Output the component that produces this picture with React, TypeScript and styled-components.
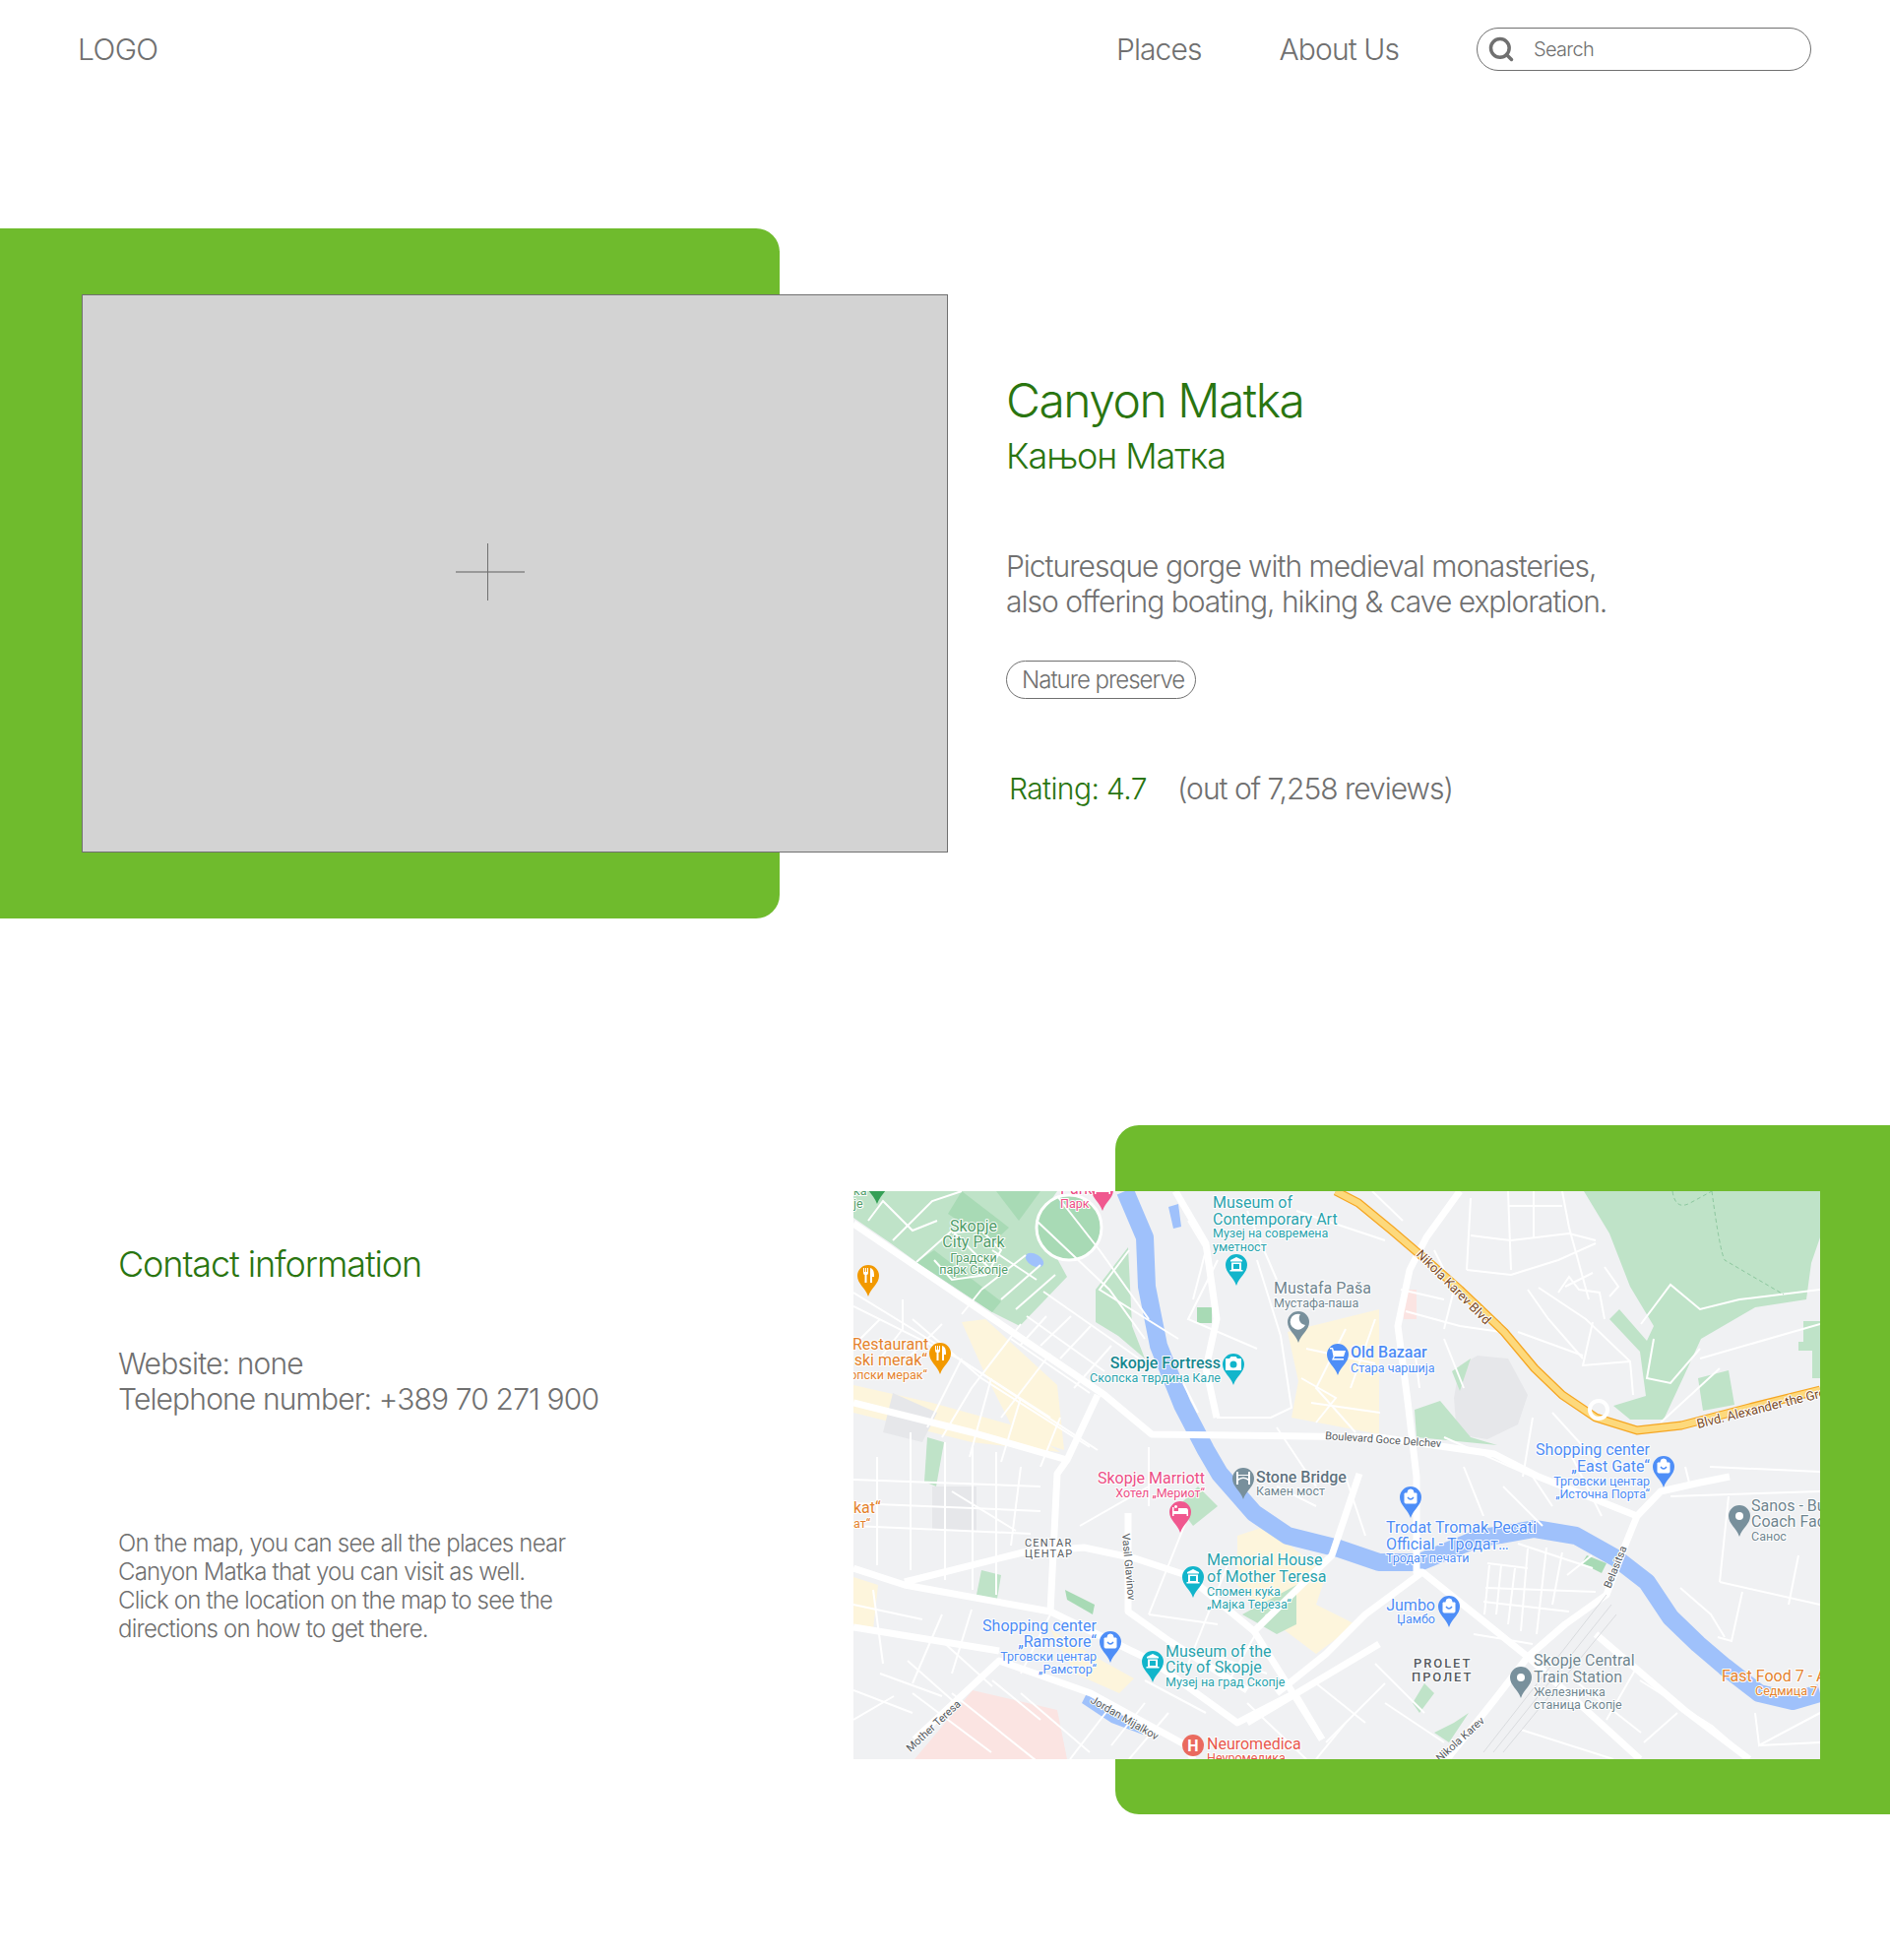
import * as React from 'react'
import styled, { createGlobalStyle } from 'styled-components'
import { Search } from 'lucide-react'

const GREEN = '#6fbb2d'
const DARK_GREEN = '#2a7510'
const GREY = '#707070'

const GlobalStyle = createGlobalStyle`
  html, body { margin: 0; padding: 0; background: #fff; }
  body { font-family: Inter, "Noto Sans", sans-serif; font-weight: 300; color: ${GREY}; }
`

const Page = styled.div`
  width: 1920px;
  height: 1991px;
  overflow: hidden;
`

const Nav = styled.header`
  display: flex;
  align-items: center;
  height: 100px;
  padding: 0 80px 0 79px;
`

const Logo = styled.div`
  font-size: 30px;
  letter-spacing: -0.6px;
  margin-right: auto;
`

const NavLink = styled.a`
  font-size: 30px;
  letter-spacing: -0.9px;
  margin-right: 79px;
`

const SearchBox = styled.div`
  display: flex;
  align-items: center;
  box-sizing: border-box;
  width: 340px;
  height: 44px;
  border: 1px solid ${GREY};
  border-radius: 22px;
  padding-left: 10px;
  font-size: 20px;
  font-weight: 300;
  letter-spacing: -0.7px;

  svg { margin-right: 19px; }
`

const Hero = styled.section`
  display: flex;
  margin-top: 132px;
`

const HeroPanel = styled.div`
  box-sizing: border-box;
  flex: none;
  width: 792px;
  height: 701px;
  padding: 67px 0 0 83px;
  background: ${GREEN};
  border-radius: 0 24px 24px 0;
`

const Placeholder = styled.div`
  display: flex;
  align-items: center;
  justify-content: center;
  box-sizing: border-box;
  width: 880px;
  height: 567px;
  padding: 0 50px 3px 0;
  background: #d3d3d3;
  border: 1px solid ${GREY};
`

const HeroInfo = styled.div`
  margin-left: 230px;
  padding-top: 146px;
`

const Title = styled.h1`
  margin: 0;
  font-size: 48px;
  line-height: 58px;
  font-weight: 300;
  letter-spacing: -1.5px;
  color: ${DARK_GREEN};
`

const Subtitle = styled.h2`
  margin: 0;
  font-size: 36px;
  line-height: 54px;
  font-weight: 300;
  letter-spacing: -1.1px;
  color: ${DARK_GREEN};
`

const Description = styled.p`
  margin: 67px 0 0;
  font-size: 30px;
  line-height: 36px;
  letter-spacing: -1px;
`

const Tag = styled.div`
  display: inline-flex;
  align-items: center;
  box-sizing: border-box;
  height: 39px;
  margin-top: 42px;
  padding: 0 11px 0 15px;
  border: 1px solid ${GREY};
  border-radius: 20px;
  font-size: 24px;
  letter-spacing: -1px;
`

const Rating = styled.div`
  display: flex;
  margin: 73px 0 0 3px;
  font-size: 30px;
  line-height: 36px;
  letter-spacing: -1px;
`

const RatingScore = styled.span`
  color: ${DARK_GREEN};
  letter-spacing: -0.6px;
  margin-right: 31px;
`

const MapSection = styled.section`
  display: flex;
  justify-content: space-between;
  margin-top: 210px;
`

const Contact = styled.div`
  padding: 118px 0 0 120px;
`

const ContactTitle = styled.h3`
  margin: 0;
  font-size: 36px;
  line-height: 46px;
  font-weight: 300;
  letter-spacing: -1.1px;
  color: ${DARK_GREEN};
`

const ContactLines = styled.p`
  margin: 60px 0 0;
  font-size: 30px;
  line-height: 36px;
  letter-spacing: -0.85px;
`

const ContactNote = styled.p`
  margin: 114px 0 0;
  font-size: 24px;
  line-height: 29px;
  letter-spacing: -0.8px;
`

const MapPanel = styled.div`
  box-sizing: border-box;
  flex: none;
  width: 787px;
  height: 700px;
  padding-top: 67px;
  background: ${GREEN};
  border-radius: 24px 0 0 24px;
`

const MapFrame = styled.div`
  width: 982px;
  height: 577px;
  margin-left: -266px;
  background: #f0f1f3;
  overflow: hidden;

  svg { display: block; }
`

const MapText = styled.text<{ $size?: number; $weight?: number; $spacing?: number }>`
  font-family: Roboto, sans-serif;
  font-size: ${p => p.$size ?? 16}px;
  font-weight: ${p => p.$weight ?? 400};
  letter-spacing: ${p => p.$spacing ?? 0}px;
  paint-order: stroke;
  stroke: #fff;
  stroke-width: 2px;
  stroke-linejoin: round;
`

type Glyph = 'shop' | 'museum' | 'camera' | 'fork' | 'bed' | 'moon' | 'dot' | 'cart' | 'bridge' | 'none'

const Pin = ({ x, y, color, glyph }: { x: number; y: number; color: string; glyph: Glyph }) => (
  <g transform={`translate(${x} ${y})`}>
    <path d="M0 0C-3-9-11-13-11-21A11 11 0 1 1 11-21C11-13 3-9 0 0Z" fill={color} />
    {glyph === 'shop' && <path d="M-6-25H6V-16Q6-15 5-15H-5Q-6-15-6-16ZM-3-25V-26A3 3 0 0 1 3-26V-25" fill="#fff" stroke="#fff" strokeWidth="1" />}
    {glyph === 'shop' && <path d="M-3-21Q0-17 3-21" fill="none" stroke={color} strokeWidth="1.4" />}
    {glyph === 'museum' && <path d="M-6-26L0-29L6-26V-24.500H-6ZM-5-23.500H5V-16H6.500V-14.500H-6.500V-16H-5ZM-3-22V-17H3V-22Z" fill="#fff" fillRule="evenodd" />}
    {glyph === 'bridge' && <path d="M-7-28H-5V-25H5V-28H7V-15H5V-19Q0-23-5-19V-15H-7ZM-5-24V-21Q0-24 5-21V-24Z" fill="#fff" fillRule="evenodd" />}
    {glyph === 'camera' && <path d="M-8-27H-4L-2.500-29H2.500L4-27H8V-15H-8ZM0-24.500A3.500 3.500 0 1 0 0-17.500A3.500 3.500 0 1 0 0-24.500Z" fill="#fff" fillRule="evenodd" />}
    {glyph === 'fork' && <path d="M-5-29V-24Q-5-22-3.500-22V-14H-1.500V-22Q0-22 0-24V-29H-1V-25H-2V-29H-3V-25H-4V-29ZM2-14V-29Q6-28 6-22V-20H4V-14Z" fill="#fff" />}
    {glyph === 'bed' && <path d="M-8-26H-6.500V-22H-2V-25H6Q8-25 8-22V-17H6.500V-19H-6.500V-17H-8ZM-4.500-25A1.500 1.500 0 1 1-4.490-25Z" fill="#fff" />}
    {glyph === 'moon' && <path d="M2-29A8 8 0 1 0 7-18A7 7 0 0 1 2-29Z" fill="#fff" />}
    {glyph === 'dot' && <circle cx="0" cy="-21" r="4" fill="#fff" />}
    {glyph === 'cart' && <path d="M-8-28H-5L-4-25H8L6-19H-3L-4-17H6V-15.500H-6L-4.500-19L-6-26.500H-8Z" fill="#fff" />}
  </g>
)

type Label = { t: string; x: number; y: number; c: string; s?: number; w?: number; a?: 'start' | 'end' | 'middle'; r?: number; ls?: number }

const TEAL = '#2aa3ad'
const BLUE = '#4d8cf5'
const SLATE = '#6f858f'
const ORANGE = '#e4822c'
const PINK = '#ec4f86'
const PARK = '#4f9d69'
const ROAD = '#555a5e'
const BROWN = '#7a4a1f'

const labels: Label[] = [
  { t: 'Park', x: 210, y: 3, c: PINK },
  { t: 'Парк', x: 210, y: 17, c: PINK, s: 12.5 },
  { t: 'ка', x: 0, y: 4, c: PARK, s: 12.5 },
  { t: 'је', x: 0, y: 17, c: PARK, s: 12.5 },
  { t: 'Skopje', x: 122, y: 41, c: PARK, a: 'middle' },
  { t: 'City Park', x: 122, y: 57, c: PARK, a: 'middle' },
  { t: 'Градски', x: 122, y: 72, c: PARK, s: 12.5, a: 'middle' },
  { t: 'парк Скопје', x: 122, y: 84, c: PARK, s: 12.5, a: 'middle' },
  { t: 'Museum of', x: 365, y: 17, c: TEAL },
  { t: 'Contemporary Art', x: 365, y: 34, c: TEAL },
  { t: 'Музеј на современа', x: 365, y: 47, c: TEAL, s: 12.5 },
  { t: 'уметност', x: 365, y: 61, c: TEAL, s: 12.5 },
  { t: 'Mustafa Paša', x: 427, y: 104, c: SLATE },
  { t: 'Мустафа-паша', x: 427, y: 118, c: SLATE, s: 12.5 },
  { t: 'Restaurant', x: -1, y: 161, c: ORANGE },
  { t: 'ski merak“', x: 75, y: 177, c: ORANGE, a: 'end' },
  { t: 'опски мерак“', x: 75, y: 191, c: ORANGE, s: 12.5, a: 'end' },
  { t: 'Skopje Fortress', x: 373, y: 180, c: '#17878f', w: 500, a: 'end' },
  { t: 'Скопска тврдина Кале', x: 373, y: 194, c: TEAL, s: 12.5, a: 'end' },
  { t: 'Old Bazaar', x: 505, y: 169, c: BLUE, w: 500 },
  { t: 'Стара чаршија', x: 505, y: 184, c: BLUE, s: 12.5 },
  { t: 'Boulevard Goce Delchev', x: 479, y: 252, c: ROAD, s: 11, r: 4 },
  { t: 'Nikola Karev Blvd', x: 571, y: 65, c: BROWN, s: 13, r: 45 },
  { t: 'Blvd. Alexander the Great', x: 858, y: 241, c: BROWN, s: 13, r: -14 },
  { t: 'Shopping center', x: 809, y: 268, c: BLUE, a: 'end' },
  { t: '„East Gate“', x: 809, y: 285, c: BLUE, a: 'end' },
  { t: 'Трговски центар', x: 809, y: 299, c: BLUE, s: 12.5, a: 'end' },
  { t: '„Источна Порта“', x: 809, y: 312, c: BLUE, s: 12.5, a: 'end' },
  { t: 'Stone Bridge', x: 409, y: 296, c: '#5f7380', w: 500 },
  { t: 'Камен мост', x: 409, y: 309, c: SLATE, s: 12.5 },
  { t: 'Skopje Marriott', x: 357, y: 297, c: PINK, a: 'end' },
  { t: 'Хотел „Мериот“', x: 357, y: 311, c: PINK, s: 12.5, a: 'end' },
  { t: 'kat“', x: 0, y: 327, c: ORANGE },
  { t: 'ат“', x: 0, y: 342, c: ORANGE, s: 12.5 },
  { t: 'CENTAR', x: 174, y: 361, c: ROAD, s: 11, ls: 1.2 },
  { t: 'ЦЕНТАР', x: 174, y: 372, c: ROAD, s: 11, ls: 1.2 },
  { t: 'Vasil Glavinov', x: 273, y: 348, c: ROAD, s: 11, r: 85 },
  { t: 'Memorial House', x: 359, y: 380, c: TEAL },
  { t: 'of Mother Teresa', x: 359, y: 397, c: TEAL },
  { t: 'Спомен куќа', x: 359, y: 411, c: TEAL, s: 12.5 },
  { t: '„Мајка Тереза“', x: 359, y: 424, c: TEAL, s: 12.5 },
  { t: 'Shopping center', x: 247, y: 447, c: BLUE, a: 'end' },
  { t: '„Ramstore“', x: 247, y: 463, c: BLUE, a: 'end' },
  { t: 'Трговски центар', x: 247, y: 477, c: BLUE, s: 12.5, a: 'end' },
  { t: '„Рамстор“', x: 247, y: 490, c: BLUE, s: 12.5, a: 'end' },
  { t: 'Museum of the', x: 317, y: 473, c: TEAL },
  { t: 'City of Skopje', x: 317, y: 489, c: TEAL },
  { t: 'Музеј на град Скопје', x: 317, y: 503, c: TEAL, s: 12.5 },
  { t: 'Jordan Mijalkov', x: 240, y: 519, c: ROAD, s: 11, r: 30 },
  { t: 'Mother Teresa', x: 58, y: 570, c: ROAD, s: 11, r: -43 },
  { t: 'Neuromedica', x: 359, y: 567, c: '#e8574c' },
  { t: 'Неуромедика', x: 359, y: 580, c: '#e8574c', s: 12.5 },
  { t: 'Trodat Tromak Pecati', x: 541, y: 347, c: BLUE },
  { t: 'Official - Тродат…', x: 541, y: 364, c: BLUE },
  { t: 'Тродат печати', x: 541, y: 377, c: BLUE, s: 12.5 },
  { t: 'Jumbo', x: 591, y: 426, c: BLUE, a: 'end' },
  { t: 'Џамбо', x: 591, y: 439, c: BLUE, s: 12.5, a: 'end' },
  { t: 'PROLET', x: 569, y: 484, c: ROAD, s: 13, w: 500, ls: 1.9 },
  { t: 'ПРОЛЕТ', x: 567, y: 498, c: ROAD, s: 13, w: 500, ls: 1.9 },
  { t: 'Skopje Central', x: 691, y: 482, c: SLATE },
  { t: 'Train Station', x: 691, y: 499, c: SLATE },
  { t: 'Железничка', x: 691, y: 513, c: SLATE, s: 12.5 },
  { t: 'станица Скопје', x: 691, y: 526, c: SLATE, s: 12.5 },
  { t: 'Sanos - Bus', x: 912, y: 325, c: SLATE },
  { t: 'Coach Factory', x: 912, y: 341, c: SLATE },
  { t: 'Санос', x: 912, y: 355, c: SLATE, s: 12.5 },
  { t: 'Fast Food 7 - A', x: 882, y: 498, c: ORANGE },
  { t: 'Седмица 7', x: 916, y: 512, c: ORANGE, s: 12.5 },
  { t: 'Belasitsa', x: 769, y: 404, c: ROAD, s: 11, r: -68 },
  { t: 'Nikola Karev', x: 596, y: 580, c: ROAD, s: 11, r: -42 },
]

const pins: { x: number; y: number; color: string; glyph: Glyph }[] = [
  { x: 253, y: 20, color: '#f0588f', glyph: 'bed' },
  { x: 24, y: 13, color: '#34a056', glyph: 'none' },
  { x: 15, y: 107, color: '#f29900', glyph: 'fork' },
  { x: 88, y: 186, color: '#f29900', glyph: 'fork' },
  { x: 389, y: 96, color: '#12b5cb', glyph: 'museum' },
  { x: 386, y: 197, color: '#12b5cb', glyph: 'camera' },
  { x: 452, y: 154, color: '#78909c', glyph: 'moon' },
  { x: 492, y: 187, color: '#4e8ef7', glyph: 'cart' },
  { x: 823, y: 301, color: '#4e8ef7', glyph: 'shop' },
  { x: 396, y: 313, color: '#78909c', glyph: 'bridge' },
  { x: 332, y: 347, color: '#f0588f', glyph: 'bed' },
  { x: 566, y: 332, color: '#4e8ef7', glyph: 'shop' },
  { x: 345, y: 413, color: '#12b5cb', glyph: 'museum' },
  { x: 261, y: 479, color: '#4e8ef7', glyph: 'shop' },
  { x: 304, y: 499, color: '#12b5cb', glyph: 'museum' },
  { x: 605, y: 443, color: '#4e8ef7', glyph: 'shop' },
  { x: 678, y: 515, color: '#78909c', glyph: 'dot' },
  { x: 900, y: 351, color: '#78909c', glyph: 'dot' },
]

const mainRoads = [
  '0,33 255,207 303,247 534,250 651,267 696,290 796,330',
  '0,215 120,245 217,273',
  '248,207 217,273 207,287 200,427',
  '0,383 52,400 200,427 303,477 390,540 448,510',
  '52,397 172,367 234,362 286,373 338,390 407,447',
  '279,327 279,427 321,457 400,507',
  '400,540 534,460',
  '514,287 486,370 407,447 476,557',
  '616,0 582,47 565,80 553,137 563,213 572,290 572,387 578,387 685,473 799,577',
  '890,290 860,296 820,305 796,330 785,357 765,410 723,440 685,473 651,517 603,577',
  '0,443 148,467',
  '62,557 148,477 241,510 338,563 345,577',
  '448,510 476,557',
  '578,387 520,430 480,470 430,510',
  '754,450 844,527 910,577',
  '327,0 358,53 369,130 358,180 369,230',
]

const minorRoads = [
  // around Mustafa Pasa and the fortress
  '410,70 434,147 445,220 424,230 369,230',
  '340,30 358,60 345,110',
  '280,60 250,100 330,150',
  '370,70 340,130 410,160',
  '335,195 350,225',
  '400,20 430,90',
  '450,20 540,50',
  '455,190 490,210 470,235',
  '500,140 470,200 510,245',
  '530,130 505,200',
  '460,160 530,175',
  '465,215 535,225',
  // city park paths
  '64,72 100,40 140,80',
  '40,50 80,10 110,0',
  '15,30 30,10 60,40 85,30',
  '141,60 186,90',
  '130,100 175,65',
  '150,110 190,75',
  '165,120 205,85',
  '82,70 100,90 135,85 150,60 130,40 100,42',
  '207,5 250,60 300,130',
  '186,30 260,100 296,150',
  // blocks north of Goce Delchev
  '193,102 290,170',
  '176,127 255,183',
  '160,150 240,205',
  '196,127 169,157',
  '221,127 190,157',
  '241,137 210,170',
  '262,157 224,200',
  '0,117 107,170 248,263',
  '0,103 60,140 200,230',
  '60,130 130,190 240,260',
  '27,130 0,157',
  '50,110 50,140 27,170',
  '90,135 55,170',
  '110,170 75,240',
  '140,190 118,270',
  '170,210 150,275',
  '210,230 190,280',
  '170,135 120,200 90,250',
  '200,165 150,230',
  '130,100 110,125',
  // south west grid
  '24,270 24,380',
  '58,245 58,385',
  '93,255 93,395',
  '121,260 121,405',
  '145,265 145,410',
  '0,293 190,300',
  '0,317 190,325',
  '0,340 180,348',
  '170,280 160,360',
  '100,305 165,345',
  '27,490 90,513',
  '0,507 60,530',
  '41,513 0,537',
  '55,477 107,523',
  '90,457 141,503',
  '141,497 190,537',
  '0,420 70,435',
  '20,405 30,480',
  '90,430 60,500',
  '120,425 100,490',
  '200,430 170,490',
  '100,510 200,590',
  '60,510 140,570',
  '170,510 240,570',
  // south centre
  '296,497 358,530',
  '296,520 262,563',
  '300,300 230,340',
  '300,260 300,320',
  '340,330 300,430',
  '380,380 340,480',
  '420,430 380,500',
  '300,430 370,440',
  '260,525 220,577',
  '320,530 280,577',
  '400,520 460,577',
  '470,500 520,540',
  '540,520 600,560',
  '500,540 470,577',
  '530,480 580,530',
  '480,560 540,500',
  '360,470 420,490',
  '430,300 470,320',
  // Karpos grid east of the river
  '646,380 641,430',
  '658,380 653,430',
  '672,383 665,440',
  '685,363 678,447',
  '704,362 694,450',
  '720,367 710,420',
  '642,403 754,407',
  '640,417 727,427',
  '644,378 685,383',
  '675,358 751,383',
  '630,450 690,460',
  '725,390 750,370',
  // south east
  '799,497 872,543 903,570',
  '837,530 803,560',
  '796,483 765,537',
  '678,547 772,577',
  '730,495 800,550',
  '916,530 920,563 982,530',
  '920,563 982,560',
  '880,397 889,310',
  '880,397 982,420',
  '903,407 892,457 878,453',
  '840,403 871,430 885,453',
  '960,370 950,420',
  '870,280 982,285',
  '830,310 982,305',
  '850,300 845,280',
  // north east hillside
  '627,7 623,80',
  '665,0 668,80',
  '691,0 691,47',
  '720,0 727,37 747,110',
  '627,45 668,50 727,43 754,50',
  '665,15 720,15',
  '623,80 668,85 716,70 754,53',
  '685,100 706,130 741,170',
  '696,98 744,130 789,173 792,207',
  '751,133 741,177 789,173',
  '723,97 751,83',
  '716,103 727,87 737,100 758,103 763,130',
  '763,77 777,97 768,107',
  '527,0 558,30',
  '561,122 616,137 658,143',
  '675,143 741,167',
  '556,100 600,110',
  '590,60 610,100 600,140',
  '570,160 575,200',
  '600,150 620,200',
  '800,135 830,95 860,120 900,110 982,100',
  '813,150 806,190 830,195 860,160',
  '860,170 982,135',
  '820,235 880,180',
  '600,250 690,290 710,320',
  '620,280 640,330',
  '660,300 700,340',
  '690,230 680,290',
  '730,270 760,330',
  '710,225 760,280',
  '500,290 520,350',
  '430,240 470,300',
]

const MapDrawing = () => (
  <svg width="982" height="577" viewBox="0 0 982 577" aria-label="map">
    <rect width="982" height="577" fill="#f0f1f3" />
    {/* old town and hospital blocks */}
    <path d="M441 143L534 120L534 247L445 230L452 193Z" fill="#fdf5dc" />
    <path d="M110 133L134 130L207 197L214 263L165 247L131 180Z" fill="#fdf5dc" />
    <path d="M0 197L80 215L170 240L210 265L120 255L0 225Z" fill="#fdf5dc" />
    <path d="M390 350L420 340L480 390L470 420L510 440L470 470L430 440L390 400Z" fill="#fdf5dc" />
    <path d="M200 445L240 470L285 495L270 510L225 490Z" fill="#fdf5dc" />
    <path d="M0 392L25 400L20 445L0 440Z" fill="#fdf5dc" />
    <path d="M121 507L207 527L217 577L62 577Z" fill="#fbe4e2" />
    <path d="M559 100H572V130H559Z" fill="#fbe4e2" />
    <path d="M616 177L634 167L665 170L685 207L675 237L644 252L613 247L610 210Z" fill="#e6e7ea" />
    <path d="M80 300H125V345H80Z" fill="#e6e7ea" />
    <path d="M40 205L85 225L70 255L30 245Z" fill="#e6e7ea" />

    {/* parks */}
    <path d="M0 0H207L186 30L217 87L169 137L141 123L64 72L38 53L0 27Z" fill="#bfe3c8" />
    <path d="M110 0L158 37L141 53L96 23Z" fill="#a8dab5" />
    <path d="M145 0L190 0L168 30Z" fill="#a8dab5" />
    <path d="M64 72L82 60L150 112L141 123Z" fill="#a8dab5" />
    <path d="M246 100L279 57L283 137L296 170L269 147L246 133Z" fill="#bfe3c8" />
    <circle cx="219" cy="37" r="33" fill="#a8dab5" stroke="#fff" strokeWidth="3" />
    <path d="M742 0H982V47L973 73L968 110L916 118L861 150L844 187L823 232L789 232L772 218L805 208L799 163L768 130L778 120L806 152L813 137L789 97L768 43Z" fill="#bfe3c8" />
    <path d="M858 190L889 182L895 217L863 223Z" fill="#bfe3c8" />
    <path d="M965 132H982V190H974V162H960V153H965Z" fill="#bfe3c8" />
    <path d="M570 222L596 213L627 250L654 258L572 250Z" fill="#bfe3c8" />
    <path d="M608 183L627 170L616 203Z" fill="#bfe3c8" />
    <rect x="349" y="118" width="15" height="16" fill="#a8dab5" />
    <path d="M75 250L92 255L84 300L72 295Z" fill="#bfe3c8" />
    <path d="M330 320L350 300L370 320L345 340Z" fill="#bfe3c8" />
    <path d="M215 405L245 420L243 430L217 415Z" fill="#a8dab5" />
    <path d="M130 385L150 390L145 420L125 410Z" fill="#bfe3c8" />
    <path d="M395 430L450 400L450 440L430 450Z" fill="#bfe3c8" />
    <path d="M580 500L590 510L575 530L568 520Z" fill="#bfe3c8" />
    <path d="M610 540L625 530L605 560L590 550Z" fill="#bfe3c8" />
    <path d="M745 370L765 378L760 388L740 378Z" fill="#a8dab5" />

    {/* river */}
    <polyline
      points="276,0 296,47 298,97 310,157 334,217 358,263 372,287 407,327 441,350 493,363 534,377 575,377 634,353 692,343 734,350 775,373 806,397 830,433 858,460 885,483 920,510 954,518 982,510"
      fill="none"
      stroke="#9fc1fb"
      strokeWidth="18"
      strokeLinejoin="round"
    />
    <path d="M320 16L330 13L333 36L325 38Z" fill="#9fc1fb" />
    <path d="M237 510L268 530L292 542L294 552L262 540L232 520Z" fill="#9fc1fb" />
    <ellipse cx="184" cy="70" rx="10" ry="6" fill="#9fc1fb" transform="rotate(30 184 70)" />

    {/* roads */}
    {minorRoads.map(points => (
      <polyline key={points} points={points} fill="none" stroke="#fff" strokeWidth="2" />
    ))}
    {mainRoads.map(points => (
      <polyline key={points} points={points} fill="none" stroke="#fff" strokeWidth="7" strokeLinejoin="round" />
    ))}

    {/* rail lines by the station */}
    <path d="M640 570L765 410M650 570L770 420M660 570L775 430" fill="none" stroke="#d9dbde" strokeWidth="1" />

    {/* highway */}
    <polyline
      points="490,0 513,12 547,40 582,70 616,100 661,143 692,180 720,207 754,230 796,243 841,238 910,220 982,202"
      fill="none"
      stroke="#f5a623"
      strokeWidth="9"
      strokeLinejoin="round"
    />
    <polyline
      points="490,0 513,12 547,40 582,70 616,100 661,143 692,180 720,207 754,230 796,243 841,238 910,220 982,202"
      fill="none"
      stroke="#fdd97c"
      strokeWidth="6.500"
      strokeLinejoin="round"
    />
    <circle cx="757" cy="222" r="9" fill="none" stroke="#fff" strokeWidth="4" />
    <path d="M832 0Q835 20 850 12L872 0M872 0Q880 60 885 70L945 105" fill="none" stroke="#8cc79e" strokeWidth="1" strokeDasharray="4 3" />

    {pins.map(p => (
      <Pin key={`${p.x}-${p.y}`} {...p} />
    ))}
    <circle cx="345" cy="563" r="11" fill="#ea6a5e" />
    <MapText x="345" y="569" textAnchor="middle" fill="#fff" $size={16} $weight={700} style={{ stroke: 'none' }}>H</MapText>

    {labels.map(l => (
      <MapText
        key={`${l.t}-${l.x}-${l.y}`}
        x={l.x}
        y={l.y}
        fill={l.c}
        textAnchor={l.a ?? 'start'}
        $size={l.s}
        $weight={l.w}
        $spacing={l.ls}
        transform={l.r ? `rotate(${l.r} ${l.x} ${l.y})` : undefined}
      >
        {l.t}
      </MapText>
    ))}
  </svg>
)

export default function App() {
  return (
    <Page>
      <GlobalStyle />
      <Nav>
        <Logo>LOGO</Logo>
        <NavLink>Places</NavLink>
        <NavLink>About Us</NavLink>
        <SearchBox>
          <Search size={28} strokeWidth={3} color={GREY} />
          Search
        </SearchBox>
      </Nav>

      <Hero>
        <HeroPanel>
          <Placeholder>
            <svg width="70" height="58" viewBox="0 0 70 58">
              <path d="M0 29H70" stroke="#999" strokeWidth="2" />
              <path d="M32.500 0V58" stroke="#707070" strokeWidth="1" />
            </svg>
          </Placeholder>
        </HeroPanel>
        <HeroInfo>
          <Title>Canyon Matka</Title>
          <Subtitle>Кањон Матка</Subtitle>
          <Description>
            Picturesque gorge with medieval monasteries,
            <br />
            also offering boating, hiking &amp; cave exploration.
          </Description>
          <Tag>Nature preserve</Tag>
          <Rating>
            <RatingScore>Rating: 4.7</RatingScore>
            (out of 7,258 reviews)
          </Rating>
        </HeroInfo>
      </Hero>

      <MapSection>
        <Contact>
          <ContactTitle>Contact information</ContactTitle>
          <ContactLines>
            Website: none
            <br />
            Telephone number: +389 70 271 900
          </ContactLines>
          <ContactNote>
            On the map, you can see all the places near
            <br />
            Canyon Matka that you can visit as well.
            <br />
            Click on the location on the map to see the
            <br />
            directions on how to get there.
          </ContactNote>
        </Contact>
        <MapPanel>
          <MapFrame>
            <MapDrawing />
          </MapFrame>
        </MapPanel>
      </MapSection>
    </Page>
  )
}
